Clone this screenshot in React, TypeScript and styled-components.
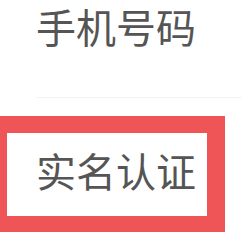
import React from "react";
import styled, { createGlobalStyle } from "styled-components";

const Global = createGlobalStyle`
  html, body { margin: 0; padding: 0; background: #ffffff; }
  body { font-family: "Noto Sans CJK SC", "Noto Sans", sans-serif; }
`;

const Page = styled.div`
  width: 242px;
  height: 232px;
  overflow: hidden;
  display: flex;
  flex-direction: column;
`;

const Row = styled.div<{ $pl: number; $pt: number; $h: number }>`
  display: flex;
  align-items: flex-start;
  padding-left: ${(p) => p.$pl}px;
  padding-top: ${(p) => p.$pt}px;
  height: ${(p) => p.$h}px;
  box-sizing: border-box;
`;

const Label = styled.span`
  font-size: 40px;
  line-height: 52px;
  color: #555555;
  white-space: nowrap;
`;

const Divider = styled.div`
  margin-left: 36px;
  height: 1px;
  background: #f3f3f3;
`;

const Highlight = styled.div`
  margin-top: 18px;
  width: 225px;
  box-sizing: border-box;
  border-style: solid;
  border-color: #ef5456;
  border-width: 17px 18px 16px 7px;
  background: #ffffff;
`;

export default function App() {
  return (
    <Page>
      <Global />
      <Row $pl={36} $pt={0} $h={97}>
        <Label>手机号码</Label>
      </Row>
      <Divider />
      <Highlight>
        <Row $pl={29} $pt={11} $h={83}>
          <Label>实名认证</Label>
        </Row>
      </Highlight>
    </Page>
  );
}
